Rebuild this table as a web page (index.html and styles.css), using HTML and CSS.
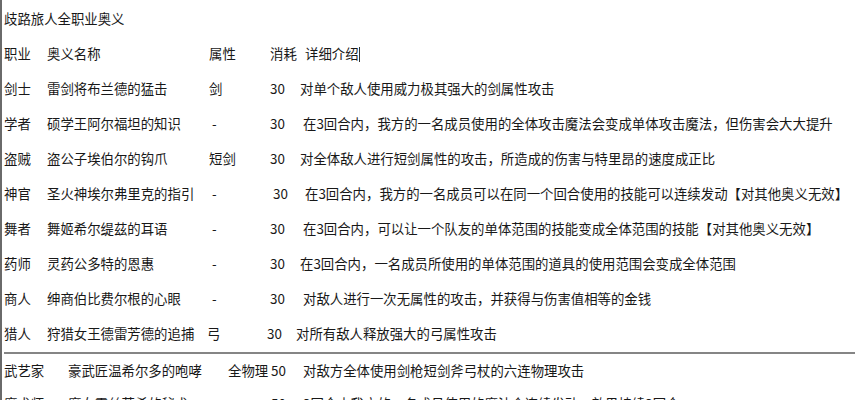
FILE: index.html
```html
<!DOCTYPE html>
<html lang="zh-CN">
<head>
<meta charset="utf-8">
<title>歧路旅人全职业奥义</title>
<link rel="stylesheet" href="styles.css">
</head>
<body>
<div class="page">
  <div class="title">歧路旅人全职业奥义</div>
  <div class="row">
    <span class="job">职业</span><span class="name">奥义名称</span><span class="attr">属性</span><span class="cost head">消耗</span><span class="desc">详细介绍<span class="caret"></span></span>
  </div>
  <div class="row">
    <span class="job">剑士</span><span class="name">雷剑将布兰德的猛击</span><span class="attr">剑</span><span class="cost">30</span><span class="desc">对单个敌人使用威力极其强大的剑属性攻击</span>
  </div>
  <div class="row">
    <span class="job">学者</span><span class="name">硕学王阿尔福坦的知识</span><span class="attr dash">-</span><span class="cost">30</span><span class="desc r1">在3回合内，我方的一名成员使用的全体攻击魔法会变成单体攻击魔法，但伤害会大大提升</span>
  </div>
  <div class="row">
    <span class="job">盗贼</span><span class="name">盗公子埃伯尔的钩爪</span><span class="attr">短剑</span><span class="cost">30</span><span class="desc">对全体敌人进行短剑属性的攻击，所造成的伤害与特里昂的速度成正比</span>
  </div>
  <div class="row">
    <span class="job">神官</span><span class="name">圣火神埃尔弗里克的指引</span><span class="attr dash">-</span><span class="cost r1">30</span><span class="desc r2">在3回合内，我方的一名成员可以在同一个回合使用的技能可以连续发动【对其他奥义无效】</span>
  </div>
  <div class="row">
    <span class="job">舞者</span><span class="name">舞姬希尔缇茲的耳语</span><span class="attr dash">-</span><span class="cost">30</span><span class="desc r1">在3回合内，可以让一个队友的单体范围的技能变成全体范围的技能【对其他奥义无效】</span>
  </div>
  <div class="row">
    <span class="job">药师</span><span class="name">灵药公多特的恩惠</span><span class="attr dash">-</span><span class="cost">30</span><span class="desc">在3回合内，一名成员所使用的单体范围的道具的使用范围会变成全体范围</span>
  </div>
  <div class="row">
    <span class="job">商人</span><span class="name">绅商伯比费尔根的心眼</span><span class="attr dash">-</span><span class="cost">30</span><span class="desc r1">对敌人进行一次无属性的攻击，并获得与伤害值相等的金钱</span>
  </div>
  <div class="row">
    <span class="job">猎人</span><span class="name">狩猎女王德雷芳德的追捕</span><span class="attr l1">弓</span><span class="cost l1">30</span><span class="desc l1">对所有敌人释放强大的弓属性攻击</span>
  </div>
  <div class="rule"></div>
  <div class="row adv">
    <span class="job wide">武艺家</span><span class="name wide">豪武匠温希尔多的咆哮</span><span class="attr wide">全物理</span><span class="cost wide">50</span><span class="desc">对敌方全体使用剑枪短剑斧弓杖的六连物理攻击</span>
  </div>
  <div class="row adv">
    <span class="job wide">魔术师</span><span class="name wide">魔女露丝莱希的秘术</span><span class="attr wide">-</span><span class="cost wide">50</span><span class="desc">3回合内我方的一名成员使用的魔法会连续发动，效果持续3回合</span>
  </div>
</div>
</body>
</html>
```
FILE: styles.css
```css
html, body {
  margin: 0;
  padding: 0;
  background: #ffffff;
}
body {
  font-family: "Noto Sans CJK SC", "Microsoft YaHei", sans-serif;
  font-size: 13.4px;
  color: #181818;
  overflow: hidden;
  height: 400px;
}
.page {
  border-left: 2px solid #6a6a6a;
  height: 400px;
  padding-left: 2px;
  padding-top: 1px;
}
.title {
  line-height: 35px;
}
.row {
  display: flex;
  line-height: 35px;
  white-space: nowrap;
}
.job { width: 43px; }
.name { width: 162px; }
.attr { width: 61px; }
.attr.dash { padding-left: 3px; width: 58px; }
.attr.l1 { padding-left: 0; width: 60px; margin-left: -2px; }
.cost { width: 30px; }
.cost.head { width: 35px; }
.cost.r1 { margin-left: 3px; }
.cost.l1 { width: 31px; }
.desc.r1 { padding-left: 3px; }
.desc.r2 { padding-left: 2px; }
.desc.l1 { margin-left: -2px; }
.caret {
  display: inline-block;
  width: 1px;
  height: 15px;
  background: #333;
  vertical-align: -3px;
}
.rule {
  height: 2px;
  background: #858585;
  margin: 1px 0 0 0;
}
.row.adv { line-height: 33px; }
.job.wide { width: 64px; }
.name.wide { width: 160px; }
.attr.wide { width: 43px; }
.cost.wide { width: 32px; }
```
